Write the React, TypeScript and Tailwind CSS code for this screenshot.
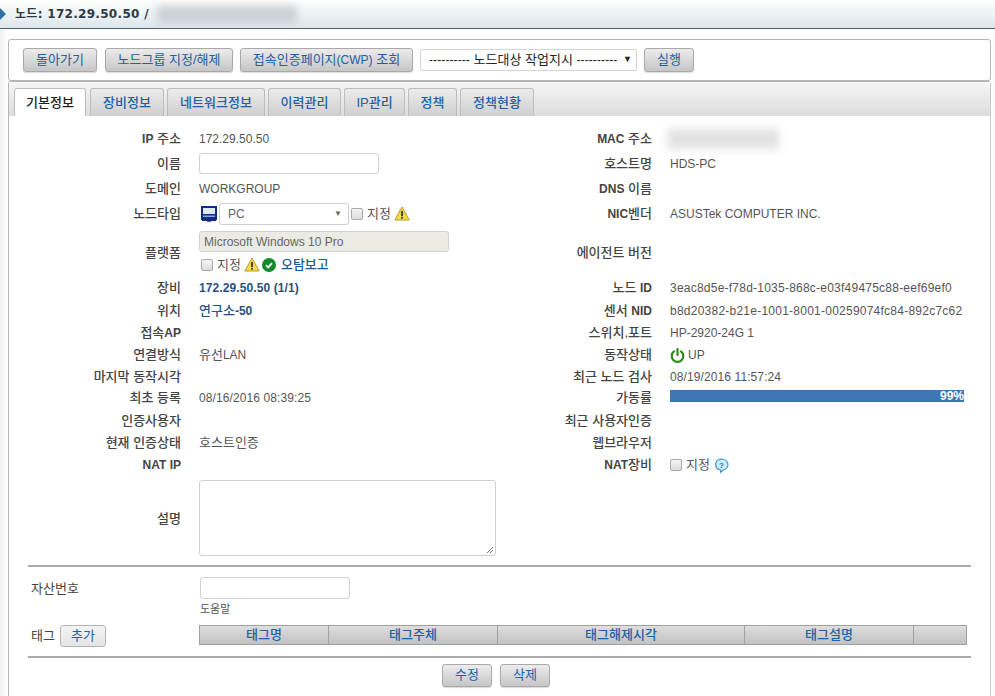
import React from "react";

const Btn = ({ w, h = "h-6", children }: { w: string; h?: string; children: React.ReactNode }) => (
  <button className={`${w} ${h} shrink-0 rounded-[3px] border border-[#a9a9a9] bg-gradient-to-b from-[#ececec] to-[#c6c6c6] text-[13px] text-[#2160a8] shadow-[0_1px_1px_rgba(0,0,0,0.15)]`}>
    {children}
  </button>
);

const Warn = () => (
  <svg width="16" height="15" viewBox="0 0 16 15" className="shrink-0">
    <path d="M8 1 L15.2 14 L0.8 14 Z" fill="#f7d94c" stroke="#b89a2a" strokeWidth="1" strokeLinejoin="round" />
    <rect x="7.1" y="5" width="1.8" height="5" fill="#333" />
    <rect x="7.1" y="10.8" width="1.8" height="1.8" fill="#333" />
  </svg>
);

const Check = () => (
  <svg width="14" height="14" viewBox="0 0 14 14" className="shrink-0">
    <circle cx="7" cy="7" r="7" fill="#12892a" />
    <path d="M4 7.2 L6.2 9.4 L10 5.2" fill="none" stroke="#fff" strokeWidth="1.8" />
  </svg>
);

const Box = () => (
  <span className="inline-block h-[12px] w-[12px] shrink-0 rounded-[2px] border border-[#a8a8a8] bg-gradient-to-b from-[#f4f4f4] to-[#dcdcdc]" />
);

const L = ({ children }: { children: React.ReactNode }) => <span className="text-[12px] font-bold">{children}</span>;

const Label = ({ children, className = "" }: { children?: React.ReactNode; className?: string }) => (
  <div className={`flex items-center justify-end whitespace-pre pr-[18px] text-[13px] font-medium text-[#444] ${className}`}>{children}</div>
);
const Val = ({ children, className = "" }: { children?: React.ReactNode; className?: string }) => (
  <div className={`flex items-center text-[#555] ${className}`}>{children}</div>
);

const tabs: [string, string][] = [
  ["장비정보", "w-[74px]"],
  ["네트워크정보", "w-[98px]"],
  ["이력관리", "w-[73px]"],
  ["IP관리", "w-[61px]"],
  ["정책", "w-[49px]"],
  ["정책현황", "w-[74px]"],
];

const heads: [string, string][] = [
  ["태그명", "w-[129px]"],
  ["태그주체", "w-[169px]"],
  ["태그해제시각", "w-[247px]"],
  ["태그설명", "w-[169px]"],
  ["", "flex-1"],
];

export default function App() {
  return (
    <div className="h-[696px] w-[995px] overflow-hidden bg-white text-[12px] font-['Liberation_Sans','Noto_Sans_CJK_KR',sans-serif]">
      <div className="flex h-[29px] items-center border-b border-[#4b6072] bg-gradient-to-b from-white to-[#dde6ea]">
        <svg width="6" height="12" viewBox="0 0 6 12" className="shrink-0"><path d="M0 0 L6 6 L0 12 Z" fill="#2f6ea5" /></svg>
        <span className="ml-[9px] whitespace-pre font-['DejaVu_Sans','Noto_Sans_CJK_KR',sans-serif] text-[12px] font-bold tracking-[0.3px] text-[#2b3a48]">노드: 172.29.50.50 /</span>
        <div className="ml-[8px] h-[17px] w-[140px] bg-[#c9d0d6] blur-[4px]" />
      </div>

      <div className="bg-gradient-to-r from-[#f0f0f0] to-white to-[8px] pt-[10px] pl-[8px] pr-[4px]">
        <div className="flex h-[42px] items-center gap-[7px] rounded-[3px] border border-[#b5b5b5] bg-white pl-[14px]">
          <Btn w="w-[74px]">돌아가기</Btn>
          <Btn w="w-[128px] ml-[1px]">노드그룹 지정/해제</Btn>
          <Btn w="w-[173px]">접속인증페이지<span className="text-[12px]">(CWP)</span> 조회</Btn>
          <div className="flex h-[22px] w-[217px] items-center justify-between rounded-[2px] border border-[#d5d5d5] bg-white pl-[8px] pr-[4px] text-[13px] text-[#222]">
            <span className="whitespace-pre"><span className="text-[12px] tracking-[0.1px]">----------</span> 노드대상 작업지시 <span className="text-[12px] tracking-[0.1px]">----------</span></span>
            <span className="text-[9px]">▼</span>
          </div>
          <Btn w="w-[50px]">실행</Btn>
        </div>

        <div className="h-[615px] rounded-t-[3px] border border-b-0 border-[#b5b5b5] border-r-[#c8c8c8]">
          <div className="flex h-[34px] items-end gap-[3px] bg-gradient-to-b from-[#f6f6f6] to-[#dcdcdc] pl-[6px]">
            <div className="-ml-[1px] mr-[1px] flex h-[28px] w-[72px] items-center justify-center rounded-t-[3px] border border-b-0 border-[#bdbdbd] bg-white text-[13px] font-medium text-[#222]">기본정보</div>
            {tabs.map(([t, w]) => (
              <div key={t} className={`${w} flex h-[28px] items-center justify-center rounded-t-[3px] border border-b-0 border-[#bdbdbd] bg-gradient-to-b from-[#ececec] to-[#cfcfcf] text-[13px] font-medium text-[#2160a8]`}>{t}</div>
            ))}
          </div>

          <div className="mt-[10px] grid grid-cols-[190px_361px_110px_294px] grid-rows-[25px_25px_25px_25px_50px_23px_23px_22px_22px_21px_22px_23px_21px_24px_83px]">
            <Label><L>IP</L> 주소</Label><Val>172.29.50.50</Val>
            <Label><L>MAC</L> 주소</Label><Val><div className="-ml-[3px] h-[20px] w-[112px] bg-[#e2e2e2] blur-[4px]" /></Val>

            <Label>이름</Label><Val><div className="h-[21px] w-[180px] rounded-[3px] border border-[#cfcfcf] bg-white" /></Val>
            <Label>호스트명</Label><Val>HDS-PC</Val>

            <Label>도메인</Label><Val>WORKGROUP</Val>
            <Label><L>DNS</L> 이름</Label><Val />

            <Label>노드타입</Label>
            <Val className="pl-[2px]">
              <svg width="16" height="16" viewBox="0 0 16 16" className="mr-[2px] shrink-0">
                <rect x="0" y="0" width="16" height="14" fill="#0f2a86" />
                <rect x="2" y="2" width="12" height="6" fill="#dfe8f5" />
                <rect x="2" y="9.5" width="12" height="1.5" fill="#8fa6d8" />
                <rect x="1" y="14" width="14" height="1" fill="#0f2a86" />
                <rect x="6" y="15" width="4" height="1" fill="#d03030" />
              </svg>
              <div className="flex h-[22px] w-[130px] items-center justify-between rounded-[3px] border border-[#cfcfcf] bg-white pl-[8px] pr-[6px] text-[#666]">
                <span>PC</span><span className="text-[8px] text-[#666]">▼</span>
              </div>
              <div className="ml-[2px] flex items-center text-[13px]"><Box /><span className="ml-[4px] mr-[3px]">지정</span><Warn /></div>
            </Val>
            <Label><L>NIC</L>벤더</Label><Val>ASUSTek COMPUTER INC.</Val>

            <Label className="pt-[3px]">플랫폼</Label>
            <div className="flex flex-col justify-start pt-[5px] text-[#555]">
              <div className="flex h-[21px] w-[250px] items-center rounded-[3px] border border-[#d2d2cc] bg-[#ebebe4] pl-[4px] text-[#666]">Microsoft Windows 10 Pro</div>
              <div className="mt-[3px] flex items-center pl-[2px] text-[13px]">
                <Box /><span className="ml-[4px] mr-[3px]">지정</span><Warn /><span className="ml-[2px] mr-[5px]"><Check /></span><span className="font-medium text-[#1c5a96]">오탐보고</span>
              </div>
            </div>
            <Label className="pt-[3px]">에이전트 버전</Label><Val />

            <Label>장비</Label><Val className="font-bold tracking-[0.1px] text-[#27527f]">172.29.50.50 (1/1)</Val>
            <Label>노드 <L>ID</L></Label><Val className="tracking-[0.23px]">3eac8d5e-f78d-1035-868c-e03f49475c88-eef69ef0</Val>

            <Label>위치</Label><Val className="text-[13px] font-medium text-[#27527f]">연구소<span className="text-[12px] font-bold">-50</span></Val>
            <Label>센서 <L>NID</L></Label><Val className="tracking-[0.24px]">b8d20382-b21e-1001-8001-00259074fc84-892c7c62</Val>

            <Label>접속<L>AP</L></Label><Val />
            <Label>스위치,포트</Label><Val>HP-2920-24G 1</Val>

            <Label>연결방식</Label><Val className="text-[13px]">유선<span className="text-[12px]">LAN</span></Val>
            <Label>동작상태</Label>
            <Val className="gap-[3px]">
              <svg width="15" height="15" viewBox="0 0 15 15" className="shrink-0" fill="none" stroke="#2f8a1c" strokeWidth="2.2" strokeLinecap="round">
                <path d="M4 3.4 A5.8 5.8 0 1 0 11 3.4" /><path d="M7.5 1.2 V7" />
              </svg>
              UP
            </Val>

            <Label>마지막 동작시각</Label><Val />
            <Label>최근 노드 검사</Label><Val className="tracking-[0.1px]">08/19/2016 11:57:24</Val>

            <Label>최초 등록</Label><Val className="tracking-[0.1px]">08/16/2016 08:39:25</Val>
            <Label>가동률</Label>
            <Val className="items-start pt-[3px]"><div className="flex h-[12px] w-[294px] items-center justify-end bg-[#3b78b4] font-bold text-white">99%</div></Val>

            <Label>인증사용자</Label><Val />
            <Label>최근 사용자인증</Label><Val />

            <Label>현재 인증상태</Label><Val className="text-[13px]">호스트인증</Val>
            <Label>웹브라우저</Label><Val />

            <Label><L>NAT IP</L></Label><Val />
            <Label><L>NAT</L>장비</Label>
            <Val className="gap-[4px] text-[13px]">
              <Box /><span>지정</span>
              <svg width="15" height="15" viewBox="0 0 15 15" className="shrink-0">
                <path d="M7.5 1 A6.4 5.6 0 0 1 9.2 12 L6.5 14.2 L6.5 12 A6.4 5.6 0 0 1 7.5 1 Z" fill="#cdebfa" stroke="#2f94cf" strokeWidth="1.2" />
                <text x="7.5" y="9.5" fontSize="8" fontWeight="bold" textAnchor="middle" fill="#1f6fa8">?</text>
              </svg>
            </Val>

            <Label>설명</Label>
            <Val className="items-start pt-[3px]">
              <div className="relative h-[76px] w-[297px] rounded-[3px] border border-[#cfcfcf] bg-white">
                <svg width="8" height="8" viewBox="0 0 8 8" className="absolute bottom-[1px] right-[1px]"><path d="M7 1 L1 7 M7 4 L4 7" stroke="#777" /></svg>
              </div>
            </Val>
            <div /><div />
          </div>

          <div className="mx-[19px] mt-[5px] border-t-2 border-[#aaa]">
            <div className="mt-[10px] flex">
              <div className="w-[172px] pl-[3px] pt-[2px] text-[13px] text-[#444]">자산번호</div>
              <div>
                <div className="h-[22px] w-[150px] rounded-[3px] border border-[#cfcfcf] bg-white" />
                <div className="mt-[2px] text-[11px] text-[#555]">도움말</div>
              </div>
            </div>
            <div className="mt-[7px] flex">
              <div className="flex w-[171px] items-start gap-[5px] pl-[3px] text-[13px] text-[#444]">
                <span className="pt-[1px]">태그</span>
                <button className="h-[22px] w-[46px] rounded-[3px] border border-[#b5b5b5] bg-gradient-to-b from-[#f4f4f4] to-[#e4e4e4] text-[#2160a8]">추가</button>
              </div>
              <div className="flex h-[20px] w-[768px] border border-[#a0a0a0] bg-gradient-to-b from-[#dedede] to-[#c2c2c2] text-[13px]">
                {heads.map(([t, w], i) => (
                  <div key={i} className={`${w} flex items-center justify-center border-r border-[#a0a0a0] font-medium text-[#2160a8] last:border-r-0`}>{t}</div>
                ))}
              </div>
            </div>
            <div className="mt-[9px] border-t-2 border-[#aaa]" />
            <div className="mt-[6px] flex justify-center gap-[8px] pr-[7px]">
              <Btn w="w-[50px]" h="h-[23px]">수정</Btn>
              <Btn w="w-[50px]" h="h-[23px]">삭제</Btn>
            </div>
          </div>
        </div>
      </div>
    </div>
  );
}
